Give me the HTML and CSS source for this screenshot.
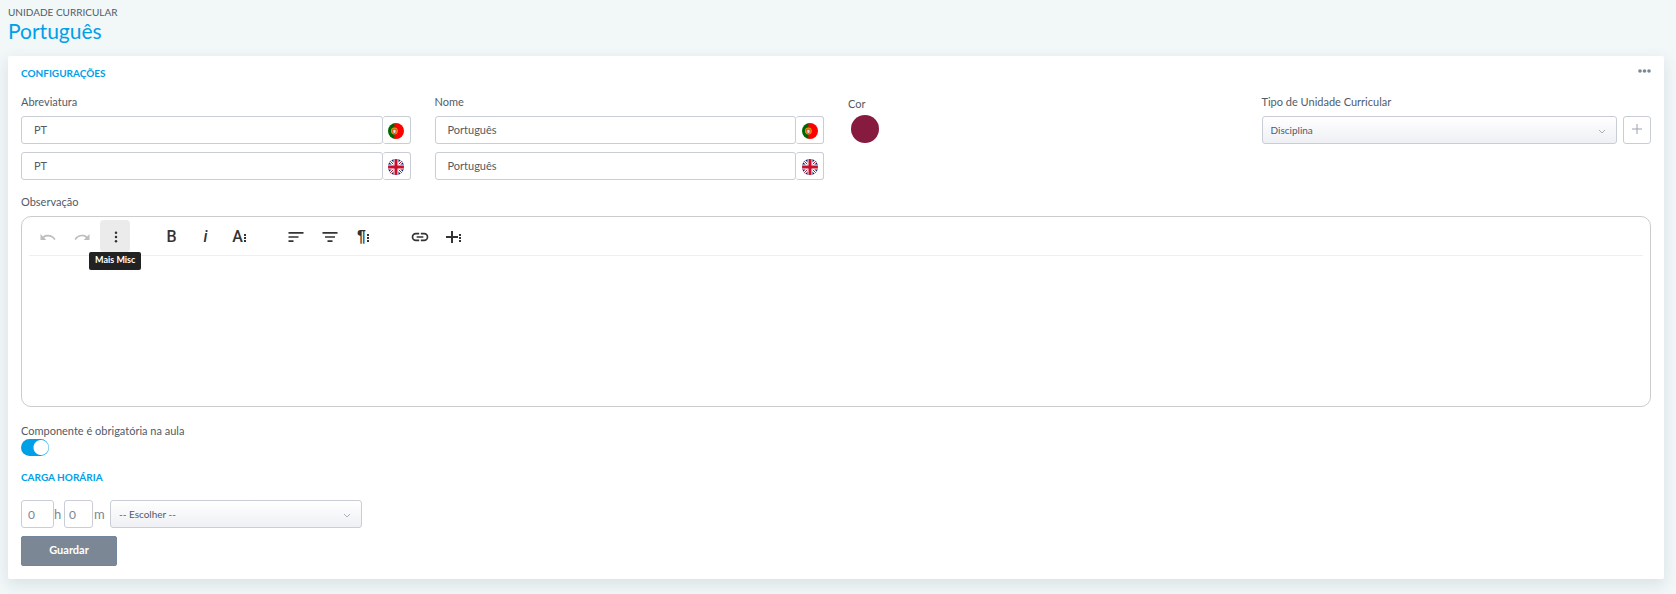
FILE: index.html
```
<!DOCTYPE html>
<html lang="pt">
<head>
  <meta charset="utf-8">
  <title>Unidade Curricular - Português</title>
  <link rel="stylesheet" href="styles.css">
</head>
<body>
  <svg class="defs" aria-hidden="true">
    <symbol id="flag-pt" viewBox="0 0 16 16">
      <clipPath id="round"><circle cx="8" cy="8" r="8"/></clipPath>
      <g clip-path="url(#round)">
        <path fill="#f00" d="M6 0h10v16H6z"/>
        <path fill="#060" d="M0 0h6.400v16H0z"/>
        <circle cx="6.400" cy="8" r="3.400" fill="#d9a514"/>
        <path fill="#e33" d="M4.300 5.800h4.200v2.900a2.100 2.100 0 0 1-4.200 0z"/>
        <path fill="#dde" d="M5.200 6.700h2.400v2a1.200 1.200 0 0 1-2.400 0z"/>
      </g>
    </symbol>
    <symbol id="flag-en" viewBox="0 0 16 16">
      <g clip-path="url(#round)">
        <path fill="#012169" d="M0 0h16v16H0z"/>
        <path stroke="#fff" stroke-width="3" d="M0 0l16 16M16 0L0 16"/>
        <path stroke="#c8102e" stroke-width="1" d="M0 0l16 16M16 0L0 16"/>
        <path stroke="#fff" stroke-width="5" d="M8 0v16M0 8h16"/>
        <path stroke="#c8102e" stroke-width="3" d="M8 0v16M0 8h16"/>
      </g>
    </symbol>
  </svg>

  <header class="page-header">
    <div class="page-type">Unidade Curricular</div>
    <h1>Português</h1>
  </header>

  <form class="card">
    <div class="card-header">
      <h2>Configurações</h2>
      <button type="button" class="card-menu" aria-label="Mais opções">
        <svg width="13" height="4" viewBox="0 0 13 4"><circle cx="2" cy="2" r="1.800"/><circle cx="6.500" cy="2" r="1.800"/><circle cx="11" cy="2" r="1.800"/></svg>
      </button>
    </div>

    <div class="fields">
      <div class="field">
        <label for="abrev-pt">Abreviatura</label>
        <div class="lang-input">
          <input type="text" id="abrev-pt" value="PT">
          <span class="flag"><svg><use href="#flag-pt"/></svg></span>
        </div>
        <div class="lang-input">
          <input type="text" aria-label="Abreviatura (EN)" value="PT">
          <span class="flag"><svg><use href="#flag-en"/></svg></span>
        </div>
      </div>
      <div class="field">
        <label for="nome-pt">Nome</label>
        <div class="lang-input">
          <input type="text" id="nome-pt" value="Português">
          <span class="flag"><svg><use href="#flag-pt"/></svg></span>
        </div>
        <div class="lang-input">
          <input type="text" aria-label="Nome (EN)" value="Português">
          <span class="flag"><svg><use href="#flag-en"/></svg></span>
        </div>
      </div>
      <div class="field field-color">
        <label for="cor">Cor</label>
        <button type="button" id="cor" class="color"></button>
      </div>
      <div class="field">
        <label for="tipo">Tipo de Unidade Curricular</label>
        <div class="select-row">
          <div class="select">
            <select id="tipo"><option>Disciplina</option></select>
            <svg class="chevron" viewBox="0 0 8 5"><path d="M1 1l3 3 3-3"/></svg>
          </div>
          <button type="button" class="add" aria-label="Adicionar">
            <svg width="10" height="10" viewBox="0 0 10 10"><path d="M5 0v10M0 5h10"/></svg>
          </button>
        </div>
      </div>
    </div>

    <label class="obs-label" for="obs">Observação</label>
    <div class="editor">
      <div class="toolbar">
        <div class="group">
          <button type="button" class="tool" disabled aria-label="Desfazer"><svg viewBox="0 0 24 24"><path d="M10.400 9.400c-1.700.3-3.200.9-4.600 2L3 8.500v7h7l-2.700-2.700c3.700-2.600 8.800-1.800 11.500 1.900.2.3.4.5.5.8l1.800-.9c-2.200-3.800-6.400-5.900-10.700-5.200z"/></svg></button>
          <button type="button" class="tool" disabled aria-label="Refazer"><svg viewBox="0 0 24 24"><path d="M13.600 9.400c1.700.3 3.200.9 4.600 2L21 8.500v7h-7l2.700-2.700c-3.700-2.700-8.800-1.800-11.400 1.900-.2.3-.4.5-.5.8L3 14.600c2.100-3.800 6.300-5.900 10.600-5.200z"/></svg></button>
          <button type="button" class="tool active" aria-label="Mais Misc"><svg viewBox="0 0 24 24"><circle cx="12" cy="7" r="1.500"/><circle cx="12" cy="12" r="1.500"/><circle cx="12" cy="17" r="1.500"/></svg><span class="tooltip">Mais Misc</span></button>
        </div>
        <div class="group">
          <button type="button" class="tool" aria-label="Negrito"><span class="letter">B</span></button>
          <button type="button" class="tool" aria-label="Itálico"><em class="letter">i</em></button>
          <button type="button" class="tool" aria-label="Mais Texto"><span class="letter">A</span><svg class="dots" viewBox="0 0 3 11"><path d="M0 2h2v2H0zM0 5h2v2H0zM0 8h2v2H0z"/></svg></button>
        </div>
        <div class="group">
          <button type="button" class="tool" aria-label="Alinhar à esquerda"><svg viewBox="0 0 24 24"><path d="M3 6h18v2H3zM3 11h12v2H3zM3 16h6v2H3z"/></svg></button>
          <button type="button" class="tool" aria-label="Centrar"><svg viewBox="0 0 24 24"><path d="M3 6h18v2H3zM6 11h12v2H6zM9 16h6v2H9z"/></svg></button>
          <button type="button" class="tool" aria-label="Mais Parágrafo"><span class="letter pilcrow">¶</span><svg class="dots" viewBox="0 0 3 11"><path d="M0 2h2v2H0zM0 5h2v2H0zM0 8h2v2H0z"/></svg></button>
        </div>
        <div class="group">
          <button type="button" class="tool" aria-label="Inserir ligação"><svg viewBox="0 0 24 24"><path d="M11 17H7A5 5 0 0 1 7 7h4v2H7a3 3 0 0 0 0 6h4zM17 7h-4v2h4a3 3 0 0 1 0 6h-4v2h4a5 5 0 0 0 0-10zM8 11h8v2H8z"/></svg></button>
          <button type="button" class="tool" aria-label="Mais Inserir"><svg class="plus" viewBox="0 0 12 12"><path d="M5 0h2v5h5v2H7v5H5V7H0V5h5z"/></svg><svg class="dots" viewBox="0 0 3 11"><path d="M0 2h2v2H0zM0 5h2v2H0zM0 8h2v2H0z"/></svg></button>
        </div>
      </div>
      <textarea id="obs"></textarea>
    </div>

    <label class="switch-label" for="obrigatoria">Componente é obrigatória na aula</label>
    <input type="checkbox" id="obrigatoria" class="switch" checked>

    <h2 class="hours-title">Carga Horária</h2>
    <div class="hours">
      <input type="text" id="horas" class="hour" placeholder="0">
      <label for="horas">h</label>
      <input type="text" id="minutos" class="minute" placeholder="0">
      <label for="minutos">m</label>
      <div class="select">
        <select aria-label="Periodicidade"><option>-- Escolher --</option></select>
        <svg class="chevron" viewBox="0 0 8 5"><path d="M1 1l3 3 3-3"/></svg>
      </div>
    </div>

    <button type="submit" class="save">Guardar</button>
  </form>
</body>
</html>
```
FILE: styles.css
```
* {
  box-sizing: border-box;
}

body {
  margin: 0;
  padding: 4px 12px 15px 8px;
  font-family: Lato, sans-serif;
  font-size: 11px;
  line-height: 16px;
  color: #515b66;
  background-color: #f2f7f8;
}

input,
select,
textarea,
button {
  margin: 0;
  font: inherit;
  color: inherit;
}

svg {
  display: block;
}

.defs {
  position: absolute;
  width: 0;
  height: 0;
}

.page-type {
  font-size: 10px;
  text-transform: uppercase;
}

h1 {
  margin: 0;
  font-size: 21px;
  font-weight: 400;
  line-height: 22px;
  color: #00a0e9;
}

.card {
  display: block;
  margin-top: 14px;
  padding: 9px 13px 13px;
  background-color: #fff;
  border-radius: 2px;
  box-shadow: 0 5px 15px rgba(70, 100, 110, 0.15);
}

.card-header {
  display: flex;
  justify-content: space-between;
  align-items: flex-start;
}

h2 {
  margin: 0;
  font-size: 10px;
  font-weight: 700;
  line-height: 16px;
  text-transform: uppercase;
  color: #00a0e9;
}

.card-menu {
  padding: 4px 0;
  border: 0;
  background: none;
  fill: #7b8794;
}

.fields {
  display: grid;
  grid-template-columns: repeat(4, 1fr);
  gap: 24px;
  margin-top: 13px;
}

.field label {
  display: block;
  margin-bottom: 6px;
}

.lang-input {
  display: flex;
  margin-bottom: 8px;
}

.lang-input input {
  flex: 1;
  min-width: 0;
  height: 28px;
  padding: 0 12px 2px;
  border: 1px solid #c9ced6;
  border-radius: 3px;
  background-color: #fff;
}

.flag {
  display: flex;
  align-items: center;
  justify-content: center;
  width: 28px;
  height: 28px;
  padding-top: 2px;
  border: 1px solid #c9ced6;
  border-left: 0;
  border-radius: 3px;
}

.flag svg {
  width: 16px;
  height: 16px;
}

.field-color label {
  margin: 2px 0 3px;
}

.color {
  width: 28px;
  height: 28px;
  margin-left: 3px;
  border: 0;
  border-radius: 50%;
  background-color: #861b3f;
}

.select-row {
  display: flex;
  gap: 6px;
}

.select {
  position: relative;
  flex: 1;
}

.select select {
  display: block;
  width: 100%;
  height: 28px;
  padding: 0 8px;
  font-size: 10px;
  border: 1px solid #c9ced6;
  border-radius: 3px;
  background: linear-gradient(#fff, #eff0f4);
  appearance: none;
}

.chevron {
  position: absolute;
  top: 13px;
  right: 11px;
  width: 8px;
  height: 5px;
  fill: none;
  stroke: #a9afbb;
  pointer-events: none;
}

.add {
  display: flex;
  align-items: center;
  justify-content: center;
  width: 28px;
  height: 28px;
  padding: 0 0 2px;
  border: 1px solid #c9ced6;
  border-radius: 3px;
  background-color: #fff;
  stroke: #9aa3af;
}

.obs-label {
  display: block;
  margin: 6px 0;
}

.editor {
  border: 1px solid #ccc;
  border-radius: 10px;
}

.toolbar {
  display: flex;
  gap: 26px;
  margin: 0 7px;
  padding: 3px;
  border-bottom: 1px solid #efefef;
}

.group {
  display: flex;
  gap: 4px;
}

.tool {
  position: relative;
  display: flex;
  align-items: center;
  justify-content: center;
  gap: 1px;
  width: 30px;
  height: 32px;
  padding: 2px 0 0 1px;
  border: 0;
  border-radius: 4px;
  background: none;
  color: #333;
  fill: #333;
}

.tool svg {
  width: 20px;
  height: 20px;
}

.tool .plus {
  width: 12px;
  height: 12px;
}

.tool .dots {
  width: 3px;
  height: 11px;
}

.tool:disabled {
  fill: #bdbdbd;
}

.tool.active {
  background-color: #ebebeb;
}

.letter {
  font-family: Roboto, sans-serif;
  font-size: 16px;
  font-weight: 500;
}

.pilcrow {
  font-family: "Liberation Sans", sans-serif;
  font-weight: 700;
}

.tooltip {
  position: absolute;
  top: 32px;
  left: -11px;
  z-index: 1;
  padding: 0 6px 2px;
  font-size: 9px;
  font-weight: 700;
  white-space: nowrap;
  color: #fff;
  background-color: #222;
  border-radius: 2px;
}

.editor textarea {
  display: block;
  width: 100%;
  height: 150px;
  padding: 10px;
  border: 0;
  border-radius: 10px;
  background: none;
  resize: none;
}

.switch-label {
  display: block;
  margin-top: 16px;
}

.switch {
  display: block;
  width: 28px;
  height: 17px;
  border-radius: 9px;
  background: #00a0e9 radial-gradient(circle at 20px 50%, #fff 7px, transparent 8px);
  appearance: none;
}

.hours-title {
  margin-top: 13px;
}

.hours {
  display: flex;
  margin: 15px 0 8px;
}

.hours input {
  height: 28px;
  padding: 0 6px;
  font-size: 12px;
  border: 1px solid #c9ced6;
  border-radius: 3px;
}

.hours input::placeholder {
  color: #7b8794;
}

.hours .hour {
  width: 33px;
}

.hours .minute {
  width: 29px;
  padding: 0 4px;
}

.hours label {
  font-size: 13px;
  line-height: 28px;
  color: #7b8794;
}

.hours label[for="horas"] {
  width: 10px;
}

.hours label[for="minutos"] {
  width: 17px;
  padding-left: 1px;
}

.hours .select {
  flex: 0 0 252px;
}

.save {
  display: block;
  width: 96px;
  height: 30px;
  padding: 0 0 2px;
  font-weight: 700;
  color: #fff;
  border: 1px solid #7386a0;
  border-radius: 2px;
  background-color: #7b8794;
}
```
